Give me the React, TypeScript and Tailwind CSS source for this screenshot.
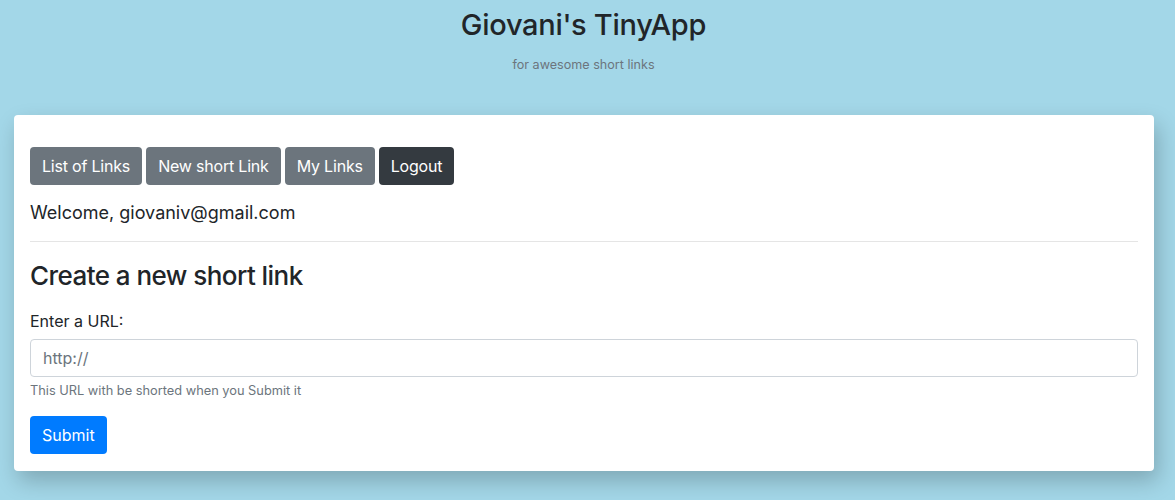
import React from 'react';

export default function App() {
  const font = { fontFamily: 'Inter, "Liberation Sans", Arial, sans-serif' };

  return (
    <div className="min-h-[500px] bg-[#a3d7e8] text-[#212529]" style={font}>
      <header className="flex flex-col items-center pt-[6px] pr-[8px]">
        <h1 className="text-[29px] leading-[38px] font-medium tracking-[-0.3px]">Giovani's TinyApp</h1>
        <p className="mt-[13px] text-[12.6px] leading-[16px] text-[#6c757d]">for awesome short links</p>
      </header>

      <main className="ml-[14px] mr-[21px] mt-[42px] rounded-[4px] bg-white px-4 pt-8 pb-[17px] shadow-[4px_10px_22px_rgba(0,0,0,0.22)]">
        <nav className="flex gap-1">
          <button className="h-[38px] rounded-[4px] bg-[#6c757d] px-3 text-base tracking-[-0.2px] text-white">List of Links</button>
          <button className="h-[38px] rounded-[4px] bg-[#6c757d] px-3 text-base tracking-[-0.2px] text-white">New short Link</button>
          <button className="h-[38px] rounded-[4px] bg-[#6c757d] px-3 text-base tracking-[-0.2px] text-white">My Links</button>
          <button className="h-[38px] rounded-[4px] bg-[#343a40] px-3 text-base tracking-[-0.2px] text-white">Logout</button>
        </nav>

        <p className="mt-[17px] text-[18px] leading-[22px]">Welcome, giovaniv@gmail.com</p>
        <hr className="mt-[17px] border-t border-[#e5e5e5]" />

        <h2 className="mt-[17px] text-[26px] leading-[34px] font-medium tracking-[-0.55px]">Create a new short link</h2>

        <form className="mt-[16px]" onSubmit={e => e.preventDefault()}>
          <label className="block text-base leading-6">Enter a URL:</label>
          <input
            type="text"
            placeholder="http://"
            className="mt-[6px] block h-[38px] w-full rounded-[4px] border border-[#ced4da] px-3 text-base text-[#495057] placeholder:text-[#6c757d]"
          />
          <small className="mt-[4px] block text-[12.8px] leading-[19px] text-[#6c757d]">This URL with be shorted when you Submit it</small>
          <button type="submit" className="mt-[16px] h-[38px] rounded-[4px] bg-[#007bff] px-3 text-base text-white">Submit</button>
        </form>
      </main>
    </div>
  );
}
